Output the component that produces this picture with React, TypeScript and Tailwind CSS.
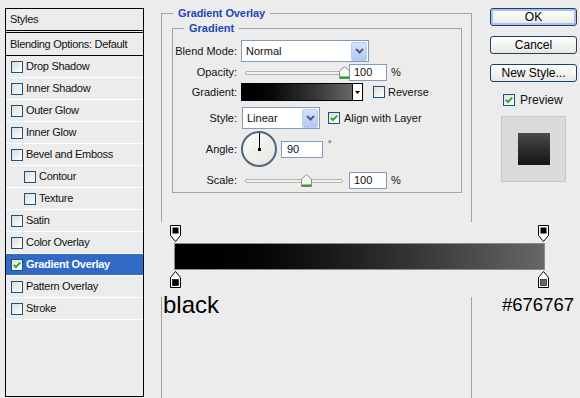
import React from "react";

const font = "font-['Liberation_Sans',Arial,sans-serif]";

interface StyleRow {
  label: string;
  indent?: boolean;
  checked?: boolean;
  active?: boolean;
}

const rows: StyleRow[] = [
  { label: "Drop Shadow" },
  { label: "Inner Shadow" },
  { label: "Outer Glow" },
  { label: "Inner Glow" },
  { label: "Bevel and Emboss" },
  { label: "Contour", indent: true },
  { label: "Texture", indent: true },
  { label: "Satin" },
  { label: "Color Overlay" },
  { label: "Gradient Overlay", checked: true, active: true },
  { label: "Pattern Overlay" },
  { label: "Stroke" },
];

function Check({ checked }: { checked?: boolean }) {
  return (
    <span className="w-[12px] h-[12px] shrink-0 border border-[#1c5180] bg-gradient-to-br from-[#dcdcd7] to-white flex items-center justify-center">
      {checked && (
        <svg width="8" height="8" viewBox="0 0 8 8">
          <path d="M0.8 3.8 L3 6 L7.2 1.6" fill="none" stroke="#21a121" strokeWidth="1.8" />
        </svg>
      )}
    </span>
  );
}

function Thumb() {
  return (
    <svg width="11" height="13" viewBox="0 0 11 13" className="shrink-0">
      <path d="M5.5 0.5 L10.5 5 V12.5 H0.5 V5 Z" fill="#f6f6f2" stroke="#8c8c84" />
      <path d="M1 11.5 H10" stroke="#21a121" strokeWidth="2" />
    </svg>
  );
}

function Track({ width, thumbAt }: { width: number; thumbAt: number }) {
  return (
    <div className="relative h-[13px] ml-[4px]" style={{ width }}>
      <div className="absolute left-0 right-0 top-[5px] h-[4px] rounded-full border border-[#b4b4ac] bg-[#f2f2ec]" />
      <div className="absolute top-0" style={{ left: thumbAt }}>
        <Thumb />
      </div>
    </div>
  );
}

function Chevron() {
  return (
    <span className="w-[16px] h-[19px] mr-[1px] rounded-[2px] bg-gradient-to-b from-[#d6e2fb] to-[#b4c8f3] border border-[#b9ccf3] flex items-center justify-center">
      <svg width="9" height="6" viewBox="0 0 9 6">
        <path d="M1 1 L4.5 4.5 L8 1" fill="none" stroke="#4d6185" strokeWidth="2" />
      </svg>
    </span>
  );
}

function Field({ label, children, h }: { label: string; children: React.ReactNode; h: number }) {
  return (
    <div className="flex items-center" style={{ height: h }}>
      <span className="w-[65px] pr-[1px] text-right">{label}</span>
      <div className="ml-[3px] flex items-center">{children}</div>
    </div>
  );
}

function Stop({ up, color }: { up?: boolean; color: string }) {
  return (
    <svg width="11" height="17" viewBox="0 0 11 17">
      {up ? (
        <>
          <path d="M5.5 0.5 L10.5 6.5 V16.5 H0.5 V6.5 Z" fill="white" stroke="black" />
          <rect x="2.5" y="8.5" width="6" height="6" fill={color} stroke="black" strokeWidth="0.6" />
        </>
      ) : (
        <>
          <path d="M0.5 0.5 H10.5 V10.5 L5.5 16.5 L0.5 10.5 Z" fill="white" stroke="black" />
          <rect x="2.5" y="2.5" width="6" height="6" fill={color} />
        </>
      )}
    </svg>
  );
}

function Button({ label, primary }: { label: string; primary?: boolean }) {
  return (
    <div
      className={`h-[18px] rounded-[3px] border border-[#1b3f70] bg-gradient-to-b from-white to-[#e8e8e2] text-[12px] leading-none flex items-center justify-center text-black ${
        primary ? "shadow-[inset_0_0_0_2px_#a8c2ee]" : ""
      }`}
    >
      {label}
    </div>
  );
}

export default function App() {
  return (
    <div className={`${font} relative w-[580px] h-[398px] overflow-hidden bg-[#ececec] text-[11px] text-[#111] flex items-start`}>
      {/* styles list */}
      <div className="ml-[5px] mt-[8px] w-[139px] h-[389px] border border-black tracking-[-0.3px]">
        <div className="h-[22px] pl-[4px] flex items-center border-b border-black">Styles</div>
        <div className="h-[24px] pl-[4px] flex items-center border-t border-black border-b mt-[1px]">
          Blending Options: Default
        </div>
        {rows.map((r) => (
          <div
            key={r.label}
            className={`h-[22px] flex items-center gap-[3px] border-b border-white ${r.indent ? "pl-[18px]" : "pl-[5px]"} ${
              r.active ? "bg-[#316ac5] text-white font-bold" : ""
            }`}
          >
            <Check checked={r.checked} />
            <span>{r.label}</span>
          </div>
        ))}
      </div>

      {/* gradient overlay settings */}
      <fieldset className="ml-[17px] mt-[7px] w-[311px] h-[420px] border border-b-0 border-[#a4a4a4]">
        <legend className="ml-[11px] px-[5px] leading-[13px] font-bold text-[#1f47b8] tracking-[-0.1px]">
          Gradient Overlay
        </legend>
        <fieldset className="ml-[10px] mt-[2px] w-[290px] border border-[#a4a4a4] pt-[5px] pb-[3px]">
          <legend className="ml-[11px] px-[5px] leading-[13px] font-bold text-[#1f47b8]">Gradient</legend>
          <div className="flex flex-col">
            <Field label="Blend Mode:" h={22}>
              <div className="w-[128px] h-[22px] bg-white border border-[#7f9db9] flex items-center justify-between pl-[4px]">
                <span>Normal</span>
                <Chevron />
              </div>
            </Field>
            <div className="h-[1px]" />
            <Field label="Opacity:" h={18}>
              <Track width={101} thumbAt={94} />
              <div className="ml-[3px] w-[38px] h-[17px] bg-white border border-[#7f9db9] pl-[4px] flex items-center">100</div>
              <span className="ml-[4px]">%</span>
            </Field>
            <div className="h-[2px]" />
            <Field label="Gradient:" h={18}>
              <div className="w-[122px] h-[18px] border border-black flex">
                <div className="flex-1 bg-gradient-to-r from-black to-[#676767]" />
                <div className="w-[10px] border-l border-black bg-white flex items-center justify-center">
                  <svg width="5" height="3" viewBox="0 0 5 3">
                    <path d="M0 0 H5 L2.5 3 Z" fill="black" />
                  </svg>
                </div>
              </div>
              <span className="ml-[10px] flex items-center gap-[3px]">
                <Check />
                <span>Reverse</span>
              </span>
            </Field>
            <div className="h-[6px]" />
            <Field label="Style:" h={22}>
              <div className="ml-[1px] w-[78px] h-[22px] bg-white border border-[#7f9db9] flex items-center justify-between pl-[4px]">
                <span>Linear</span>
                <Chevron />
              </div>
              <span className="ml-[8px] flex items-center gap-[4px]">
                <Check checked />
                <span>Align with Layer</span>
              </span>
            </Field>
            <div className="h-[2px]" />
            <Field label="Angle:" h={36}>
              <div className="relative w-[36px] h-[36px] rounded-full border-2 border-[#55657d] bg-gradient-to-br from-[#fbfbf8] to-[#e6e6df]">
                <div className="absolute left-[15.5px] top-0 w-[1.5px] h-[16px] bg-black" />
                <div className="absolute left-[14.5px] top-[14.5px] w-[3.5px] h-[3.5px] bg-black" />
              </div>
              <div className="ml-[4px] w-[42px] h-[17px] bg-white border border-[#7f9db9] pl-[5px] flex items-center">90</div>
              <span className="ml-[5px] -mt-[8px] text-[9px]">°</span>
            </Field>
            <div className="h-[4px]" />
            <Field label="Scale:" h={18}>
              <Track width={98} thumbAt={56} />
              <div className="ml-[6px] w-[38px] h-[17px] bg-white border border-[#7f9db9] pl-[4px] flex items-center">100</div>
              <span className="ml-[4px]">%</span>
            </Field>
          </div>
        </fieldset>
      </fieldset>

      {/* dialog buttons */}
      <div className="ml-[18px] mt-[8px] w-[87px] flex flex-col text-[12px]">
        <Button label="OK" primary />
        <div className="h-[10px]" />
        <Button label="Cancel" />
        <div className="h-[10px]" />
        <Button label="New Style..." />
        <div className="mt-[9px] ml-[13px] flex items-center gap-[5px]">
          <Check checked />
          <span>Preview</span>
        </div>
        <div className="mt-[7px] ml-[11px] w-[65px] h-[66px] bg-[#dadada] border border-[#c8c8c8] flex items-center justify-center">
          <div className="w-[32px] h-[32px] bg-gradient-to-b from-[#4a4a4a] to-[#151515]" />
        </div>
      </div>

      {/* gradient editor strip pasted over the dialog */}
      <div className="absolute left-[160px] top-[222px] w-[420px] h-[75px] bg-[#ececec]">
        <div className="absolute left-[10px] top-[3px]">
          <Stop color="black" />
        </div>
        <div className="absolute left-[378px] top-[3px]">
          <Stop color="black" />
        </div>
        <div className="ml-[14px] mt-[21px] w-[371px] h-[27px] border border-[#8a8a8a] bg-gradient-to-r from-black to-[#676767]" />
        <div className="absolute left-[10px] top-[49px]">
          <Stop up color="black" />
        </div>
        <div className="absolute left-[378px] top-[49px]">
          <Stop up color="#676767" />
        </div>
      </div>
      <span className="absolute left-[163px] top-[291px] text-[24px] leading-[28px] text-black">black</span>
      <span className="absolute left-[502px] top-[294px] text-[18.5px] leading-[22px] text-black">#676767</span>
    </div>
  );
}
